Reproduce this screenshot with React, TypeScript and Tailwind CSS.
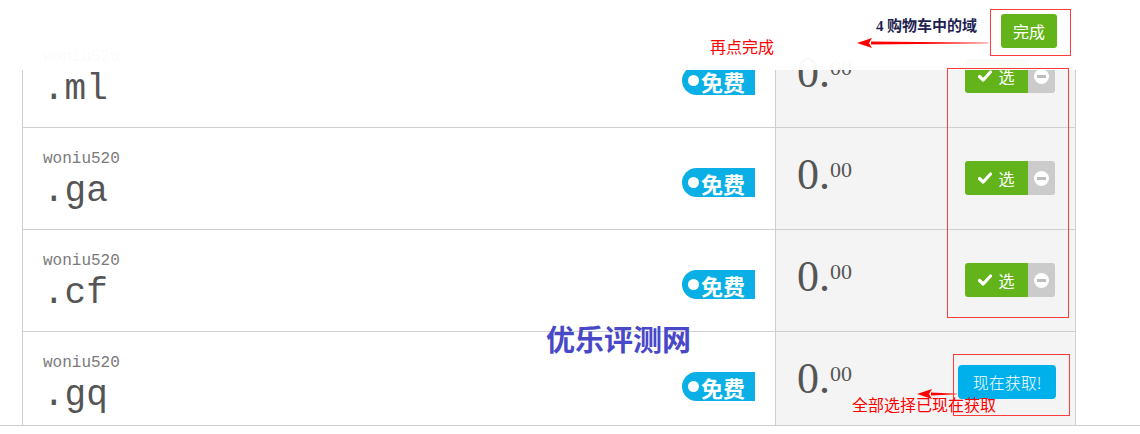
import { ReactNode } from 'react';

const cjk = "font-['Noto_Sans_CJK_SC',sans-serif]";

interface DomainRow {
  user: string;
  tld: string;
  action: 'select' | 'claim';
}

const rows: DomainRow[] = [
  { user: 'woniu520', tld: '.ml', action: 'select' },
  { user: 'woniu520', tld: '.ga', action: 'select' },
  { user: 'woniu520', tld: '.cf', action: 'select' },
  { user: 'woniu520', tld: '.gq', action: 'claim' },
];

const FreeBadge = () => (
  <div className="mt-[40px] mr-[20px] flex h-[29px] w-[73px] items-center rounded-l-full rounded-r-[3px] bg-[#0aafe6] pl-[6px]">
    <span className="h-[11px] w-[11px] rounded-full bg-white" />
    <span className={`ml-[2px] text-[22px] leading-none font-bold text-white ${cjk}`}>免费</span>
  </div>
);

const SelectToggle = () => (
  <div className="mt-[33px] mr-[20px] flex h-[34px]">
    <div className="flex w-[63px] items-center justify-center gap-[6px] rounded-l-[3px] bg-[#62b41a]">
      <svg width="14" height="12" viewBox="0 0 14 12">
        <path d="M1.5 6.5 5.2 10 12.5 2" fill="none" stroke="white" strokeWidth="3.2" strokeLinecap="round" strokeLinejoin="round" />
      </svg>
      <span className={`text-[16px] leading-none text-white ${cjk}`}>选</span>
    </div>
    <div className="flex w-[27px] items-center justify-center rounded-r-[3px] bg-[#cbcbcb]">
      <span className="flex h-[15px] w-[15px] items-center justify-center rounded-full bg-white">
        <span className="h-[3px] w-[9px] bg-[#bdbdbd]" />
      </span>
    </div>
  </div>
);

const ClaimButton = () => (
  <div
    className={`mt-[33px] mr-[19px] flex h-[34px] w-[98px] items-center justify-center rounded-[4px] bg-[#00b0ea] text-[16px] font-light text-white ${cjk}`}
  >
    现在获取!
  </div>
);

const Row = ({ row }: { row: DomainRow }) => (
  <div className="flex h-[102px] border-b border-[#cfcfcf]">
    <div className="flex flex-1 justify-between">
      <div className="pt-[21px] pl-[20px] font-['Liberation_Mono',monospace]">
        <div className="text-[16px] leading-[20px] text-[#7a7a7a]">{row.user}</div>
        <div className="mt-[3px] text-[36px] leading-[40px] text-[#555]">{row.tld}</div>
      </div>
      <FreeBadge />
    </div>
    <div className="flex w-[300px] justify-between border-l border-[#cfcfcf] bg-[#f4f4f4]">
      <div className="flex items-start pt-[25px] pl-[21px] font-['Liberation_Serif',serif] text-[#555]">
        <span className="text-[44px] leading-none">0.</span>
        <span className="mt-[6px] text-[22px] leading-none">00</span>
      </div>
      {row.action === 'select' ? <SelectToggle /> : <ClaimButton />}
    </div>
  </div>
);

const Note = ({ className, children }: { className: string; children: ReactNode }) => (
  <div className={`absolute text-[16px] leading-none whitespace-nowrap text-[#ff0000] ${cjk} ${className}`}>{children}</div>
);

const LeftArrow = ({ className, width }: { className: string; width: number }) => (
  <svg className={`absolute ${className}`} width={width} height="12" viewBox={`0 0 ${width} 12`}>
    <polygon points={`${width} 5.7, 14 4.6, 14 7.4, ${width} 6.3`} fill="#ff0000" />
    <polygon points="0,6 15,1 12,6 15,11" fill="#ff0000" />
  </svg>
);

export default function App() {
  return (
    <div className="relative h-[434px] w-[1140px] overflow-hidden bg-white">
      <div className="h-[426px] overflow-hidden border-b border-[#cfcfcf] pt-[25px] pl-[22px]">
        <div className="w-[1054px] border-x border-t border-[#cfcfcf]">
          {rows.map((row) => (
            <Row key={row.tld} row={row} />
          ))}
        </div>
      </div>

      {/* sticky cart bar */}
      <div className="absolute top-0 left-0 h-[70px] w-full bg-white/[0.97]">
        <div className={`absolute top-[16px] left-[876px] text-[15px] leading-[18px] font-bold text-[#1f1f52] ${cjk}`}>
          <span className="font-['Liberation_Serif',serif]">4</span> 购物车中的域
        </div>
        <div
          className={`absolute top-[14px] left-[1001px] flex h-[34px] w-[56px] items-center justify-center rounded-[3px] bg-[#62b41a] text-[16px] text-white ${cjk}`}
        >
          完成
        </div>
      </div>

      {/* watermark */}
      <div className={`absolute top-[320px] left-[546px] text-[29px] leading-[36px] font-bold text-[#4848c8] ${cjk}`}>
        优乐评测网
      </div>

      {/* annotations */}
      <div className="absolute top-[9px] left-[990px] h-[47px] w-[81px] border border-[#ff3b3b]" />
      <div className="absolute top-[68px] left-[947px] h-[250px] w-[122px] border border-[#ff3b3b]" />
      <div className="absolute top-[354px] left-[953px] h-[62px] w-[117px] border border-[#ff3b3b]" />
      <Note className="top-[38px] left-[710px]">再点完成</Note>
      <LeftArrow className="top-[37px] left-[857px]" width={131} />
      <LeftArrow className="top-[388px] left-[917px]" width={40} />
      <Note className="top-[396px] left-[852px]">全部选择已现在获取</Note>
    </div>
  );
}
